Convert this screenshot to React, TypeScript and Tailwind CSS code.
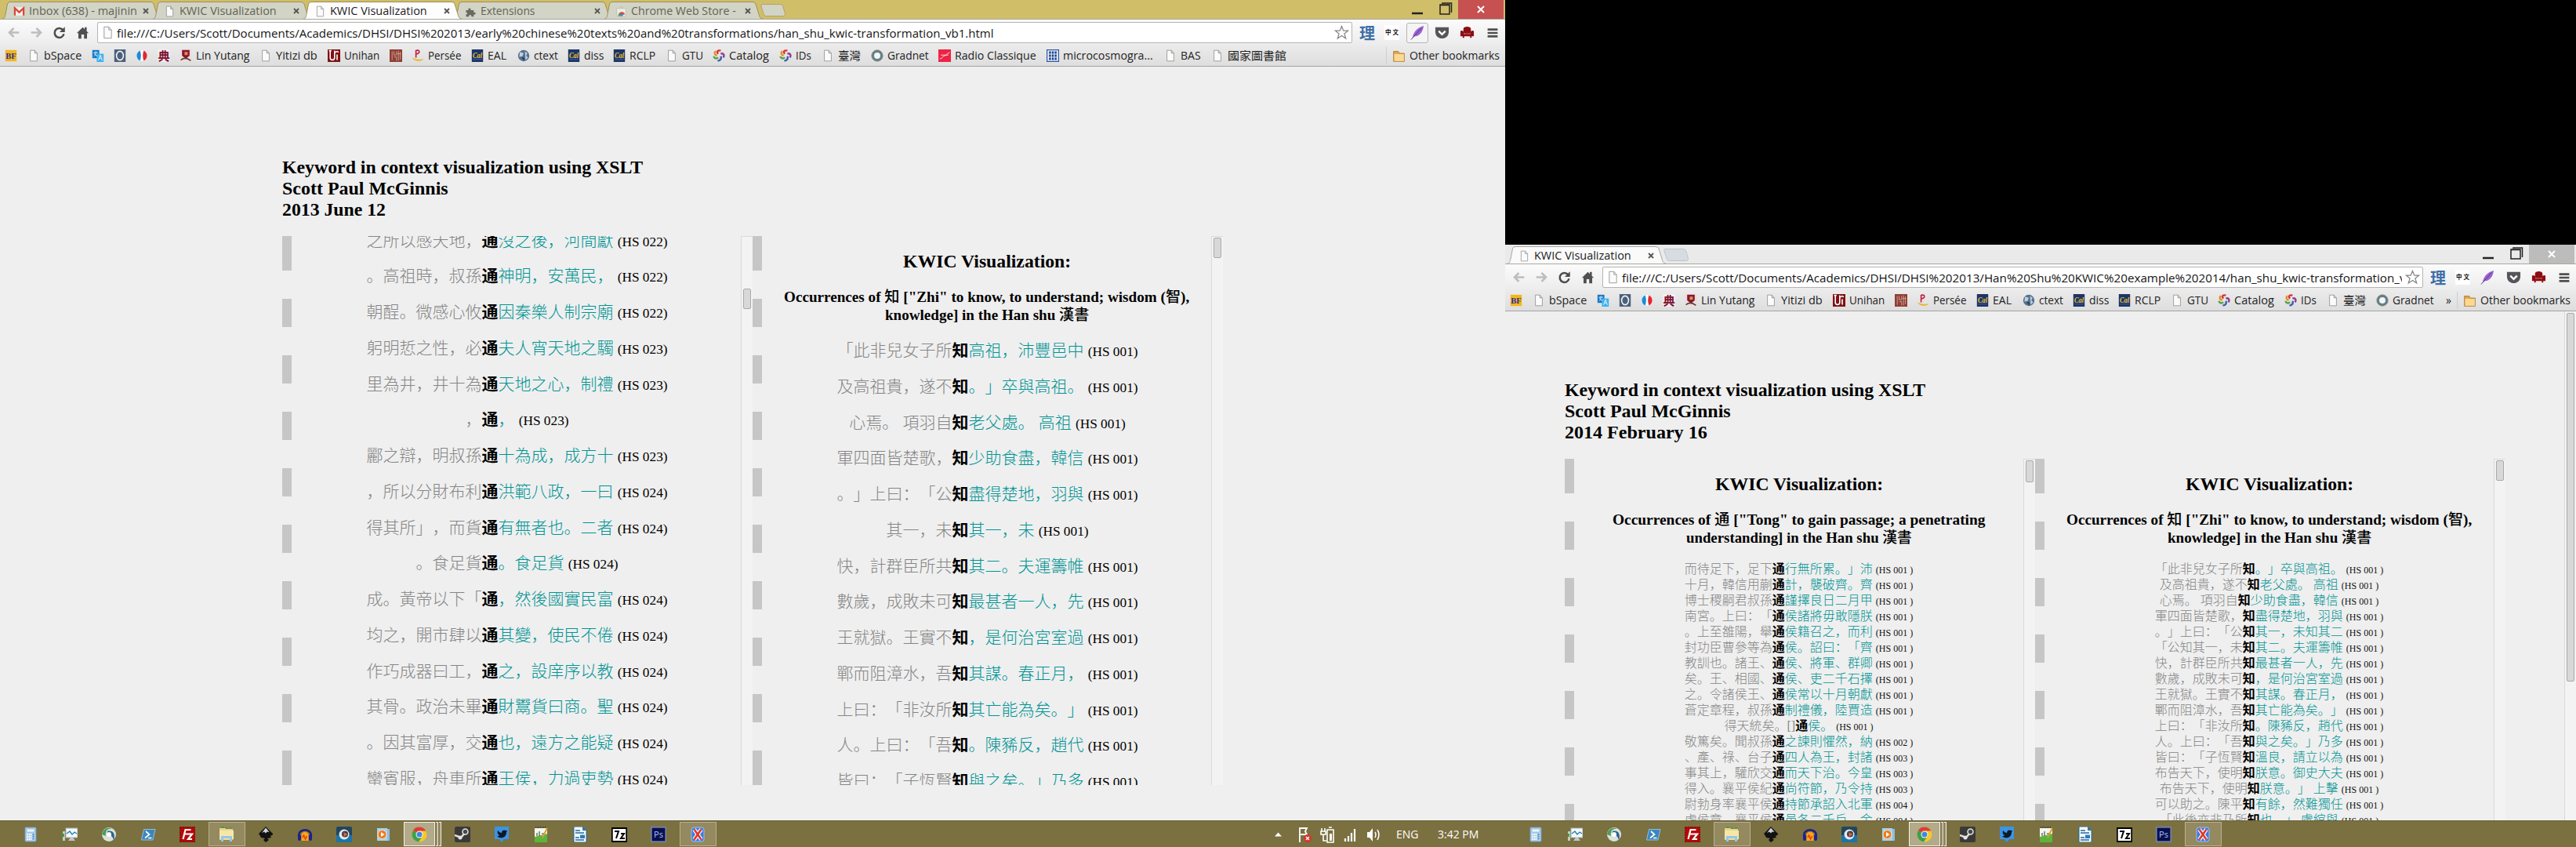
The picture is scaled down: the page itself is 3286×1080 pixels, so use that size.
import React, { useLayoutEffect, useRef, useState } from "react";

/* Text stretched or squeezed to a given width. */
function Fit({ w, className = "", children }: { w: number; className?: string; children: React.ReactNode }) {
  const ref = useRef<HTMLSpanElement>(null);
  const [scale, setScale] = useState(1);
  useLayoutEffect(() => {
    const el = ref.current;
    if (el && el.offsetWidth > 0) setScale(w / el.offsetWidth);
  }, [w]);
  return (
    <span className={"block shrink-0 whitespace-nowrap " + className} style={{ width: w }}>
      <span ref={ref} className="inline-block origin-left" style={{ transform: `scaleX(${scale})` }}>
        {children}
      </span>
    </span>
  );
}

const CAL = (
  <>
    <rect x="1" y="0" width="18" height="20" fill="#1d3466" />
    <path d="M3 16h14" stroke="#3d6fb5" strokeWidth="1" />
    <text x="10" y="14" fontSize="12" fontWeight="bold" fontStyle="italic" fill="#f1c433" textAnchor="middle" textLength="15" lengthAdjust="spacingAndGlyphs" fontFamily="Liberation Serif">Cal</text>
  </>
);
const SWIRL = (
  <g fill="none" strokeWidth="3">
    <path d="M9 7C5 3 9 1 13 2" stroke="#d8342c" />
    <path d="M13 7c5-2 6 3 4 6" stroke="#8b3d92" />
    <path d="M13 11c2 5-2 7-5 7" stroke="#3a62ad" />
    <path d="M9 13c-4 3-7 0-7-2" stroke="#53a345" />
    <path d="M7 10C2 8 3 4 5 3" stroke="#e8892c" />
  </g>
);

const ICONS: Record<string, React.ReactNode> = {
  page: <path d="M4.5 1.5h7l4 4.5v12.5h-11zM11.5 1.5v4.5h4" fill="#fbfbfb" stroke="#8d8d8d" />,
  gmail: (
    <>
      <rect x="1" y="3" width="18" height="14" fill="#f4efec" />
      <path d="M2.5 17V4.500l7.500 7 7.500-7V17" fill="none" stroke="#d9463a" strokeWidth="3" />
    </>
  ),
  puzzle: <path d="M2 8h4c-2-4 5-5 4 0h5v4c4-2 5 4 0 3.500V19h-4c1-4-5-4-4 0H2v-4c3 1 3-4 0-3z" fill="#6a6a62" />,
  store: (
    <>
      <path d="M2 5h16l-1 14H3z" fill="#ecebe4" stroke="#bbb9ab" />
      <path d="M7 5c0-4 6-4 6 0" fill="none" stroke="#bbb9ab" />
      <path d="M5 18c0-8 10-9 11-3l-5 1z" fill="#d8483a" />
      <path d="M5 18c0-3 1-5 3-5l3 5z" fill="#4a9e4c" />
      <circle cx="11" cy="16" r="2.300" fill="#4d84cf" />
    </>
  ),
  bf: (
    <>
      <rect x="1" y="1" width="18" height="18" fill="#f2b71c" />
      <text x="10" y="15.500" fontSize="13" fontWeight="bold" fill="#2a2b9c" textAnchor="middle" textLength="17" lengthAdjust="spacingAndGlyphs" fontFamily="Liberation Serif">BF</text>
    </>
  ),
  translate: (
    <>
      <rect x="1" y="1" width="11" height="13" fill="#1478c8" />
      <rect x="8" y="7" width="11" height="13" fill="#3cb2ee" />
      <path d="M3 5h7M6.500 3v2c0 4-2 5-3 6M4 6c1 2 3 4 5 4.500" stroke="#fff" fill="none" />
      <text x="13.500" y="17.500" fontSize="11" fill="#fff" textAnchor="middle" fontFamily="Open Sans">A</text>
    </>
  ),
  oval: (
    <>
      <rect x="1" y="0" width="18" height="20" fill="#4b617b" />
      <ellipse cx="10" cy="10" rx="5.500" ry="7" fill="none" stroke="#f5f5f5" strokeWidth="2" />
    </>
  ),
  french: (
    <>
      <circle cx="10" cy="10" r="8.500" fill="#fff" />
      <path d="M7 2c-7 3-7 13 0 16 2-5 2-11 0-16z" fill="#1d8bd8" />
      <path d="M13 2c7 3 7 13 0 16-2-5-2-11 0-16z" fill="#e3262f" />
    </>
  ),
  dian: (
    <>
      <rect width="20" height="20" fill="#f6eef0" />
      <text x="10" y="17.500" fontSize="19" fill="#7d1330" textAnchor="middle" fontWeight="bold" fontFamily="Noto Sans CJK TC">典</text>
    </>
  ),
  linyutang: (
    <>
      <rect width="20" height="20" fill="#ecdedd" />
      <path d="M4 1h12v9l-6 5-6-5z" fill="#8a1432" />
      <path d="M8 4h5v5H8z" fill="#d69445" />
      <path d="M2 17c5-4 11-3 16 1" stroke="#543" strokeWidth="2" fill="none" />
    </>
  ),
  unihan: (
    <>
      <rect width="20" height="20" fill="#7f1113" />
      <path d="M4 2v11c0 5 7 5 7 0V2M2 2h4M15 8v9M12 5c4-4 5 0 5 0" stroke="#fff" strokeWidth="2" fill="none" />
    </>
  ),
  seal: (
    <>
      <rect width="20" height="20" fill="#8e3f36" />
      <path d="M4 3v14M7 3v6h4V3M7 12h4v6M14 2v16M17 4v12M12 7h6" stroke="#dcb4a8" fill="none" />
    </>
  ),
  persee: (
    <>
      <path d="M7 13V2c7-3 7 6 0 5" stroke="#c11b3f" strokeWidth="2" fill="none" />
      <path d="M2 14c4 5 12 5 16 2-4 1-10 1-16-2z" fill="#e6b81f" stroke="#e6b81f" />
    </>
  ),
  cal: CAL,
  swirl: SWIRL,
  ctext: (
    <>
      <circle cx="10" cy="10" r="9" fill="#54718f" />
      <path d="M4 4l6 2-2 5-5 1zM12 3l4 3-2 4 3 3-4 4" fill="#bfd0de" />
      <path d="M7 13c2-2 5 1 4 5" fill="#27384c" />
    </>
  ),
  gradnet: (
    <>
      <circle cx="10" cy="10" r="7" fill="#f5f5f1" stroke="#5e7f92" strokeWidth="4" />
      <circle cx="10" cy="10" r="9" fill="none" stroke="#9a8a62" />
    </>
  ),
  radio: (
    <>
      <rect width="20" height="20" fill="#ee2344" />
      <path d="M2 15c5 0 5-5 8-5s3-4 8-5M4 9h12" stroke="#fff" fill="none" />
    </>
  ),
  micro: (
    <>
      <rect x=".5" y=".5" width="19" height="19" fill="#e8eef8" stroke="#2b57a5" strokeWidth="2" />
      <path d="M5.500 3v14M10 3v14M14.500 3v14" stroke="#163f8d" strokeWidth="3" strokeDasharray="4 1" />
    </>
  ),
  folder: (
    <>
      <path d="M2 3h7l2 3h7v12H2z" fill="#e0a84e" stroke="#a8742a" />
      <path d="M3 7h14.500v10.500H3z" fill="#fbd993" />
    </>
  ),
  li: <text x="10" y="17.500" fontSize="20" fill="#3f6fa8" textAnchor="middle" fontWeight="bold" fontFamily="Noto Sans CJK TC">理</text>,
  zhongwen: (
    <>
      <rect width="20" height="20" fill="#fff" />
      <text x="10" y="13" fontSize="8" fill="#111" textAnchor="middle" textLength="18" fontWeight="bold" fontFamily="Noto Sans CJK TC">中文</text>
    </>
  ),
  feather: (
    <>
      <path d="M3 17C4 10 9 3 18 1c-1 7-5 14-12 14z" fill="#9b63cf" />
      <path d="M1 19.500L15 4" stroke="#56308a" />
    </>
  ),
  pocket: (
    <>
      <path d="M1 3h18v6c0 12-18 12-18 0z" fill="#55555a" />
      <path d="M5.500 8l4.500 4.500L14.500 8" stroke="#fff" strokeWidth="2.500" fill="none" />
    </>
  ),
  sofa: (
    <>
      <path d="M5 9V5c0-4 10-4 10 0v4l-2 3H7zM1 8c3-2 5 1 5 4h8c0-3 2-6 5-4v7h-3v2h-2v-2H6v2H4v-2H1z" fill="#8c0d12" />
      <path d="M6 11.500h8" stroke="#c66" />
    </>
  ),
  menu: <path d="M2 4.500h16M2 10h16M2 15.500h16" stroke="#505050" strokeWidth="3.200" />,
  star: <path d="M10 1.500l2.400 6h6l-4.800 4 1.900 6.500L10 14.300 4.500 18l1.900-6.500-4.800-4h6z" fill="#fff" stroke="#868686" strokeWidth="1.300" />,
  back: <path d="M18 10H4M10 3.500L3.500 10l6.500 6.500" stroke="#bdbdbd" strokeWidth="3" fill="none" />,
  forward: <path d="M2 10h14M10 3.500L16.500 10 10 16.500" stroke="#bdbdbd" strokeWidth="3" fill="none" />,
  reload: (
    <>
      <path d="M15.500 6a7 7 0 1 0 1.500 6" stroke="#4d4d4d" strokeWidth="3" fill="none" />
      <path d="M18.500 1.500v8h-8z" fill="#4d4d4d" />
    </>
  ),
  home: <path d="M1 11l9-9 3 3V2h3v6l3 3h-2.500v8H12v-6H8v6H3.500v-8z" fill="#505050" />,
  calc: (
    <>
      <rect x="3" y="1" width="14" height="18" rx="1" fill="#b4d2ea" stroke="#6d99bf" />
      <rect x="5" y="3" width="10" height="4" fill="#eaf4fb" stroke="#7fa8ca" strokeWidth=".6" />
      <path d="M5.500 10h6M5.500 13h6M5.500 16h6" stroke="#fff" strokeWidth="2" strokeDasharray="1.500 1" />
      <path d="M13.500 9v8" stroke="#3f82bd" strokeWidth="2" strokeDasharray="1.500 1" />
    </>
  ),
  monitor: (
    <>
      <rect x="1" y="6" width="3" height="12" fill="#c7ccc7" />
      <rect x="1" y="9" width="2" height="4" fill="#28b12c" />
      <rect x="5" y="2" width="15" height="12" fill="#f4f8fa" stroke="#a9b0b4" />
      <path d="M6 9l4-3 3 4 3-3 3 2" stroke="#1d7fb4" fill="none" strokeWidth="1.300" />
      <path d="M11 14h3l3 4H8z" fill="#c3c6c8" />
    </>
  ),
  globe: (
    <>
      <circle cx="10" cy="10" r="9" fill="#d9e2dd" />
      <path d="M1 10C2 3 9 0 14 3c-6-1-9 3-8 9z" fill="#4f9c55" />
      <path d="M8 6c6-2 11 2 8 12-1-6-4-8-9-7z" fill="#2b648d" />
      <circle cx="10" cy="10" r="3" fill="#fff" />
    </>
  ),
  powershell: (
    <>
      <path d="M4.500 3.500H19l-3 13.500H1.500z" fill="#3c86bd" stroke="#8fc0e2" />
      <path d="M7 6l4.500 4-5.500 4.500M10 14.500h4.500" stroke="#fff" strokeWidth="1.700" fill="none" />
    </>
  ),
  filezilla: (
    <>
      <rect x=".7" y=".7" width="18.600" height="18.600" fill="#b70909" stroke="#8c0000" strokeWidth="1.400" strokeDasharray="2 1" />
      <path d="M4.500 16l3-12h7M6 9.500h5M10 9.500h6l-5 6.500h5" stroke="#fff" strokeWidth="2.200" fill="none" />
    </>
  ),
  explorer: (
    <>
      <path d="M1 2h7l1 1h9v14H1z" fill="#ecd58b" />
      <path d="M3 1h4M9 2h3M14 2h3" stroke="#4b9a4a" strokeWidth="2" />
      <path d="M1 5h18v11H1z" fill="#f7e6a7" />
      <path d="M3 19v-7h14v7h-3v-4H6v4z" fill="#8fc9ea" />
    </>
  ),
  inkscape: (
    <>
      <path d="M10 0l9 9c1 2-3 2-3 3l1 2-5 1 2 2-4 3-3-3 2-2-5-1-1-2-2-3z" fill="#121212" />
      <path d="M10 1.500L14.500 7l-3-.5-1.500 2-2-2L5 8z" fill="#cfd3da" />
    </>
  ),
  audacity: (
    <>
      <path d="M2.500 14C-1 1 21 1 17.500 14" stroke="#1c1d86" strokeWidth="2.500" fill="none" />
      <path d="M5.500 9q4.500-5 9 0v9h-9z" fill="#f9a61b" />
      <path d="M7 14l1.500-3 2 5 2-4" stroke="#e43b12" strokeWidth="1.500" fill="none" />
      <rect x="1" y="10" width="4" height="8" rx="2" fill="#20218f" />
      <rect x="15" y="10" width="4" height="8" rx="2" fill="#20218f" />
    </>
  ),
  camtasia: (
    <>
      <rect width="20" height="20" rx="2" fill="#22455f" />
      <path d="M0 11h20v9H0z" fill="#1d74a9" />
      <circle cx="10" cy="10" r="6.500" fill="#e6ebee" />
      <circle cx="11" cy="9.500" r="4" fill="#3a3f44" />
      <path d="M9.500 7l5 3-5 3z" fill="#e0653d" />
    </>
  ),
  wmp: (
    <>
      <rect x="9" y="3" width="9" height="15" fill="#8cbfe0" />
      <rect x="2" y="2" width="13" height="16" fill="#a9d2ec" />
      <circle cx="8.500" cy="10" r="5.500" fill="#f07a1b" stroke="#fbdcc0" />
      <path d="M7 7l4.500 3L7 13z" fill="#fff" />
    </>
  ),
  chrome: (
    <>
      <circle cx="10" cy="10" r="9.500" fill="#f4c928" />
      <path d="M10 10L1.800 5C5-1 15-1 18.300 5.500H10z" fill="#dc3d33" />
      <path d="M10 10L1.800 5C-1.500 11 2 18.800 9 19.500l5-7.500z" fill="#3da14a" />
      <circle cx="10" cy="10" r="4.500" fill="#fff" />
      <circle cx="10" cy="10" r="3.500" fill="#4586d8" />
    </>
  ),
  steam: (
    <>
      <rect width="20" height="20" rx="2" fill="#3b3937" />
      <path d="M0 11l8 3 5-6" stroke="#dedede" strokeWidth="2.500" fill="none" />
      <circle cx="13.500" cy="6.500" r="3.500" fill="#4b4948" stroke="#e4e4e4" strokeWidth="1.500" />
      <circle cx="7" cy="14" r="2.500" fill="#e4e4e4" />
    </>
  ),
  twitter: (
    <>
      <path d="M1 0h18v16h-6l-3 4-3-4H1z" fill="#3b94e4" />
      <path d="M4 12c3 0 3-1 3-1-2-1-3-3-2-6 2 2 3 3 5 3 0-4 4-4 5-3h2l-1 2c0 8-8 9-12 5z" fill="#0d1a26" />
    </>
  ),
  notepad: (
    <>
      <path d="M2 2h16v18H2z" fill="#f4f6ee" />
      <path d="M2 13l16-4v11H2z" fill="#5cb53a" />
      <path d="M3 1h14" stroke="#444" strokeWidth="2" strokeDasharray="1 1" />
      <path d="M5 12V8M8 12V6M11 9h4" stroke="#333" />
      <path d="M18 2l-6 12" stroke="#e09a2a" strokeWidth="2" />
    </>
  ),
  writer: (
    <>
      <path d="M2 0h11l5 5v15H2z" fill="#f7fafc" stroke="#1c6ba0" />
      <path d="M13 0v5h5z" fill="#2a7cb5" />
      <path d="M4 5h6M4 8h11M4 14h5M4 17h11" stroke="#1f6a9c" strokeWidth="1.500" />
      <rect x="10" y="10.500" width="6" height="4.500" fill="#2a7cb5" />
    </>
  ),
  sevenzip: (
    <>
      <rect x=".7" y="2" width="18.600" height="17" fill="#fff" stroke="#000" strokeWidth="2" />
      <path d="M4 6h5l-3 9M12 9h4l-4 6h5" stroke="#000" strokeWidth="2" fill="none" />
    </>
  ),
  photoshop: (
    <>
      <rect x="1" y="1" width="18" height="18" fill="#0b0f4e" stroke="#7f9fe6" />
      <text x="10" y="14" fontSize="11" fill="#a9c4ff" textAnchor="middle" fontFamily="Open Sans">Ps</text>
    </>
  ),
  oxygen: (
    <>
      <rect x="2" y="1" width="16" height="18" rx="3" fill="#3b7bdc" stroke="#9dc0f2" />
      <path d="M5.500 3.500l9 13M14.500 3.500l-9 13" stroke="#f3f5fa" strokeWidth="5" />
      <path d="M14.500 3.500l-9 13M5.500 3.500l9 13" stroke="#e0352a" strokeWidth="2.500" />
    </>
  ),
};

function Icon({ name, size = 18 }: { name: string; size?: number }) {
  return (
    <svg width={size} height={size} viewBox="0 0 20 20" className="block shrink-0">
      {ICONS[name]}
    </svg>
  );
}

/* Icon centred in a slot of a given width. */
function Slot({ name, w, size = 17 }: { name: string; w: number; size?: number }) {
  return (
    <span className="flex shrink-0 items-center justify-center" style={{ width: w }}>
      <Icon name={name} size={size} />
    </span>
  );
}

type TabData = { icon: string; title: string; w: number; active?: boolean };

function Tab({ tab, light }: { tab: TabData; light?: boolean }) {
  const fill = tab.active ? (light ? "#fafafa" : "#fdfdfd") : "#d2d4c5";
  const stroke = light ? "#a5a5a5" : "#9d905b";
  return (
    <div className={"relative h-[24px] w-[192px] shrink-0 " + (tab.active ? "z-10" : "")}>
      <svg width="202" height="24" viewBox="0 0 202 24" className="absolute top-0 left-0">
        <path d="M0 24C3 24 3 22 4 18L6.500 5Q7.500 2.500 10 2.500H189Q192 2.500 193 5L197 18C198 22 199 24 202 24" fill={fill} stroke={stroke} />
      </svg>
      <div className="relative flex h-full items-center pt-[4px] pl-[12px]">
        <Slot name={tab.icon} w={18} size={15} />
        <div className="flex w-[149px] shrink-0 pl-[4px]">
          <Fit w={tab.w} className={"text-[14px] leading-[20px] " + (tab.active ? "text-[#1c1c1c]" : "text-[#62625a]")}>{tab.title}</Fit>
        </div>
        <svg width="8" height="8" viewBox="0 0 8 8" className="shrink-0">
          <path d="M1 1l6 6M7 1L1 7" stroke="#555" strokeWidth="1.800" />
        </svg>
      </div>
    </div>
  );
}

type Bookmark = { icon: string; w: number; label?: string; lw?: number };

const BOOKMARKS: Bookmark[] = [
  { icon: "bf", w: 29 },
  { icon: "page", w: 82, label: "bSpace", lw: 48 },
  { icon: "translate", w: 28 },
  { icon: "oval", w: 28 },
  { icon: "french", w: 28 },
  { icon: "dian", w: 28 },
  { icon: "linyutang", w: 102, label: "Lin Yutang", lw: 68 },
  { icon: "page", w: 87, label: "Yitizi db", lw: 53 },
  { icon: "unihan", w: 79, label: "Unihan", lw: 45 },
  { icon: "seal", w: 28 },
  { icon: "persee", w: 76, label: "Persée", lw: 42 },
  { icon: "cal", w: 59, label: "EAL", lw: 24 },
  { icon: "ctext", w: 64, label: "ctext", lw: 31 },
  { icon: "cal", w: 58, label: "diss", lw: 25 },
  { icon: "cal", w: 67, label: "RCLP", lw: 33 },
  { icon: "page", w: 60, label: "GTU", lw: 27 },
  { icon: "swirl", w: 85, label: "Catalog", lw: 51 },
  { icon: "swirl", w: 54, label: "IDs", lw: 20 },
  { icon: "page", w: 63, label: "臺灣", lw: 29 },
  { icon: "gradnet", w: 86, label: "Gradnet", lw: 53 },
  { icon: "radio", w: 138, label: "Radio Classique", lw: 104 },
  { icon: "micro", w: 150, label: "microcosmogra...", lw: 115 },
  { icon: "page", w: 60, label: "BAS", lw: 26 },
  { icon: "page", w: 110, label: "國家圖書館", lw: 75 },
];

function BrowserChrome({ tabs, url, urlWidth, marks, overflow, light }: { tabs: TabData[]; url: string; urlWidth: number; marks: Bookmark[]; overflow?: boolean; light?: boolean }) {
  return (
    <header className="shrink-0 font-['Open_Sans','Noto_Sans_CJK_TC',sans-serif]">
      <div className={"flex h-[24px] justify-between pl-[3px] " + (light ? "bg-[#eaeaea]" : "bg-[#d0be69]")}>
        <div className="flex">
          {tabs.map((t, i) => (
            <Tab key={i} tab={t} light={light} />
          ))}
          <svg width="36" height="24" viewBox="0 0 36 24" className="ml-[6px]">
            <path d="M2.500 5.500h24q2 0 3 2l3 10q0 3-2 3H8q-2 0-3-3L2 8q-.5-2.500.5-2.500z" fill={light ? "#d7dce3" : "#d2d4c5"} stroke={light ? "#c2c2c2" : "#b1a468"} />
          </svg>
        </div>
        <div className="flex">
          <svg width="68" height="24" viewBox="0 0 68 24">
            <path d="M9 17h14" stroke="#222" strokeWidth="2.500" />
            <path d="M45 6h12v12H45zM45 6.500h12M48 5v-1h11.500v12" stroke="#222" strokeWidth="1.500" fill="none" />
          </svg>
          <div className={"mr-[2px] flex h-[24px] w-[58px] items-center justify-center " + (light ? "bg-[#bcbcbc]" : "bg-[#c75050]")}>
            <svg width="12" height="10" viewBox="0 0 12 10">
              <path d="M2 1l8 8M10 1L2 9" stroke="#fff" strokeWidth="2" />
            </svg>
          </div>
        </div>
      </div>
      <div className="flex h-[34px] items-center border-t border-[#a9a9a0] bg-linear-to-b from-[#fbfbfb] to-[#ececec] pl-[3px]">
        <Slot name="back" w={29} size={17} />
        <Slot name="forward" w={29} size={17} />
        <Slot name="reload" w={29} size={17} />
        <Slot name="home" w={31} size={17} />
        <div className="ml-[3px] flex h-[27px] grow items-center rounded-[2px] border border-[#b4b4b4] bg-white">
          <Slot name="page" w={24} size={17} />
          <div className="flex w-0 grow overflow-hidden">
            <Fit w={urlWidth} className="text-[15px] leading-[22px] text-[#151515]">{url}</Fit>
          </div>
          <Slot name="star" w={26} size={19} />
        </div>
        <div className="flex w-[195px] shrink-0 items-center pl-[3px]">
          <Slot name="li" w={32} size={20} />
          <Slot name="zhongwen" w={31} size={19} />
          <span className={light ? "flex py-px" : "ml-[3px] flex h-[26px] items-center rounded-[3px] border border-[#b5b5b5] bg-[#f4f4f4]"}>
            <Slot name="feather" w={light ? 32 : 26} size={19} />
          </span>
          <Slot name="pocket" w={34} size={19} />
          <Slot name="sofa" w={31} size={19} />
          <Slot name="menu" w={34} size={16} />
        </div>
      </div>
      <div className="flex h-[27px] items-center border-b border-[#a3a3a3] bg-linear-to-b from-[#ebebeb] to-[#dedede] pl-[5px] text-[14px] text-[#222]">
        {marks.map((m, i) => (
          <span key={i} className="flex shrink-0 items-center" style={{ width: m.w }}>
            <Slot name={m.icon} w={18} size={16} />
            {m.label && <Fit w={m.lw || 0} className="ml-[4px] leading-[20px]">{m.label}</Fit>}
          </span>
        ))}
        <span className="grow" />
        {overflow && <span className="mr-[7px] text-[14px] leading-[20px]">»</span>}
        <span className="mr-[6px] h-[22px] w-px bg-[#c9d0d8]" />
        <Slot name="folder" w={19} size={17} />
        <Fit w={115} className="mr-[7px] ml-[4px] leading-[20px]">Other bookmarks</Fit>
      </div>
    </header>
  );
}

/* before | after | source reference */
const TONG_A = `之所以感天地，|沒之後，河間獻|022
。高祖時，叔孫|神明，安萬民，|022
朝酲。微感心攸|因秦樂人制宗廟|022
躬明悊之性，必|夫人宵天地之䮷|023
里為井，井十為|天地之心，制禮|023
，|，|023
酈之辯，明叔孫|十為成，成方十|023
，所以分財布利|洪範八政，一曰|024
得其所」，而貨|有無者也。二者|024
。食足貨|。食足貨|024
成。黃帝以下「|，然後國實民富|024
均之，開市肆以|其變，使民不倦|024
作巧成器曰工，|之，設庠序以教|024
其骨。政治未畢|財鬻貨曰商。聖|024
。因其富厚，交|也，遠方之能疑|024
蠻賓服，舟車所|王侯，力過吏勢|024`.split("\n");

const ZHI_A = `「此非兒女子所|高祖，沛豐邑中|001
及高祖貴，遂不|。」卒與高祖。|001
心焉。 項羽自|老父處。 高祖|001
軍四面皆楚歌，|少助食盡，韓信|001
。」上曰：「公|盡得楚地，羽與|001
其一，未|其一，未|001
快，計群臣所共|其二。夫運籌帷|001
數歲，成敗未可|最甚者一人，先|001
王就獄。王實不|，是何治宮室過|001
鄲而阻漳水，吾|其謀。春正月，|001
上曰：「非汝所|其亡能為矣。」|001
人。上曰：「吾|。陳豨反，趙代|001
皆曰：「子恆賢|與之矣。」乃多|001`.split("\n");

const TONG_B = `而待足下，足下|行無所累。」沛|001
十月，韓信用蒯|計，襲破齊。齊|001
博士稷嗣君叔孫|謹擇良日二月甲|001
南宮。上曰：「|侯諸將毋敢隱朕|001
。上至雒陽，舉|侯籍召之，而利|001
封功臣曹參等為|侯。詔曰：「齊|001
教訓也。諸王、|侯、將軍、群卿|001
矣。王、相國、|侯、吏二千石擇|001
之。令諸侯王、|侯常以十月朝獻|001
蒼定章程，叔孫|制禮儀，陸賈造|001
得天統矣。[]|侯。|001
敬篤矣。聞叔孫|之諫則懼然，納|002
、產、祿、台子|四人為王，封諸|003
事其上，驩欣交|而天下治。今皇|003
得入。襄平侯紀|尚符節，乃令持|003
尉勃身率襄平侯|持節承詔入北軍|004
虛侯章、襄平侯|邑各二千戶，金|004`.split("\n");

const ZHI_B = `「此非兒女子所|。」卒與高祖。|001
及高祖貴，遂不|老父處。 高祖|001
心焉。 項羽自|少助食盡，韓信|001
軍四面皆楚歌，|盡得楚地，羽與|001
。」上曰：「公|其一，未知其二|001
「公知其一，未|其二。夫運籌帷|001
快，計群臣所共|最甚者一人，先|001
數歲，成敗未可|，是何治宮室過|001
王就獄。王實不|其謀。春正月，|001
鄲而阻漳水，吾|其亡能為矣。」|001
上曰：「非汝所|。陳豨反，趙代|001
人。上曰：「吾|與之矣。」乃多|001
皆曰：「子恆賢|溫良，請立以為|001
布告天下，使明|朕意。御史大夫|001
布告天下，使明|朕意。」 上擊|001
可以助之。陳平|有餘，然難獨任|001
「此後亦非乃所|也。」 盧綰與|001`.split("\n");

function Rows({ rows, word, small, className }: { rows: string[]; word: string; small?: boolean; className: string }) {
  return (
    <div className={"text-center whitespace-nowrap [font-kerning:none] [text-spacing-trim:space-all] " + className}>
      {rows.map((r, i) => {
        const [a, b, n] = r.split("|");
        return (
          <p key={i} className={small ? "h-[20px] text-[16px] leading-[20px]" : "h-[45.77px] text-[21px] leading-[45.77px]"}>
            <span className="font-light text-[#858585]">{a}</span>
            <b className="text-black">{word}</b>
            <span className="font-light text-[#009494]">{b}</span>{" "}
            <span className={small ? "text-[12px] text-[#111]" : "text-[17.300px] text-black"}>{small ? `(HS ${n} )` : `(HS ${n})`}</span>
          </p>
        );
      })}
    </div>
  );
}

const OFFSETS = [80, 152, 224, 296, 368, 440, 512, 584];

/* Scrolling column with a dashed left edge and its own scrollbar. */
function Column({ width, thumbTop, thumbHeight, children }: { width: number; thumbTop: number; thumbHeight: number; children: React.ReactNode }) {
  return (
    <section className="flex h-[700px] shrink-0 overflow-hidden" style={{ width }}>
      <div className="flex h-full w-[12px] shrink-0 flex-col justify-between">
        <i className="block h-[44px] bg-[#c6c6c6]" />
        {OFFSETS.map((o) => (
          <i key={o} className="block h-[36px] bg-[#c6c6c6]" />
        ))}
        <i className="block h-[44px] bg-[#c6c6c6]" />
      </div>
      <div className="w-0 grow overflow-hidden">{children}</div>
      <div className="w-[15px] shrink-0 border-t border-l border-[#dadada] bg-[#f3f3f3] px-[2px]">
        <div className="rounded-[2px] border border-[#a9a9a9] bg-[#d8d8d8]" style={{ marginTop: thumbTop, height: thumbHeight }} />
      </div>
    </section>
  );
}

function Heading({ lines, widths }: { lines: string[]; widths: number[] }) {
  return (
    <h3 className="text-[23.400px] leading-[27px] font-bold">
      {lines.map((l, i) => (
        <Fit key={l} w={widths[i]} className="h-[27px]">{l}</Fit>
      ))}
    </h3>
  );
}

const HAN = /([\u4e00-\u9fff]+)/;

function ColumnTitle({ lines, widths }: { lines: string[]; widths: number[] }) {
  return (
    <>
      <h3 className="flex justify-center pt-[19px] text-[23.400px] leading-[27px] font-bold">
        <Fit w={214} className="h-[27px]">KWIC Visualization:</Fit>
      </h3>
      <h4 className="mt-[20px] flex flex-col items-center text-[19px] leading-[23px] font-bold">
        {lines.map((l, i) => (
          <Fit key={l} w={widths[i]} className="h-[23px]">
            {l.split(HAN).map((part, j) => (
              <span key={j} className={j % 2 ? "font-medium" : ""}>{part}</span>
            ))}
          </Fit>
        ))}
      </h4>
    </>
  );
}

const ZHI_TITLE = ['Occurrences of 知 ["Zhi" to know, to understand; wisdom (智),', "knowledge] in the Han shu 漢書"];
const ZHI_WIDTHS = [517, 260];

const SHORTCUTS = ["calc", "monitor", "globe", "powershell", "filezilla", "explorer", "inkscape", "audacity", "camtasia", "wmp", "chrome", "steam", "twitter", "notepad", "writer", "sevenzip", "photoshop", "oxygen"];

function Shortcuts() {
  return (
    <div className="flex h-full items-center pl-[14px]">
      {SHORTCUTS.map((s) => {
        if (s === "chrome")
          return (
            <span key={s} className="flex h-full w-[51px] justify-center py-px pr-px">
              <span className="flex w-[40px] items-center justify-center border border-[#f4f2ea] bg-[#b2aa88]">
                <Icon name={s} size={20} />
              </span>
              <i className="ml-px w-[3px] border-y border-r border-[#f4f2ea] bg-[#958c66]" />
              <i className="ml-px w-[3px] border-y border-r border-[#f4f2ea] bg-[#958c66]" />
            </span>
          );
        const open = s === "explorer" || s === "oxygen";
        return (
          <span key={s} className="flex h-full w-[50px] items-center justify-center py-px">
            <span className={open ? "flex h-full w-[47px] items-center justify-center border border-[#b8b08f] bg-[#94895f]" : "flex"}>
              <Icon name={s} size={20} />
            </span>
          </span>
        );
      })}
    </div>
  );
}

function Tray() {
  return (
    <div className="flex h-full items-center font-['Open_Sans',sans-serif] text-[14px] text-white">
      <svg width="150" height="24" viewBox="0 0 150 24">
        <path d="M5 14.500l4.500-5 4.500 5z" fill="#fff" />
        <path d="M37 3v19M38 4h8l-2 4 2 4h-8" stroke="#fff" strokeWidth="1.800" fill="none" />
        <circle cx="47" cy="17" r="5" fill="#d8322e" />
        <path d="M45 15l4 4M49 15l-4 4" stroke="#fff" strokeWidth="1.400" />
        <path d="M72 6h8v16h-8zM74 3h4M65 4v4M69 4v4M64 8h6v4h-6zM67 12v8h4" stroke="#fff" strokeWidth="1.600" fill="none" />
        <path d="M75 11h3v9h-3z" fill="#fff" />
        <path d="M95 21v-4M99 21v-7M103 21V10M107 21V5" stroke="#fff" strokeWidth="2.200" />
        <path d="M123 9h3l4-5v17l-4-5h-3z" fill="#fff" />
        <path d="M133 9q2 3 0 7M136 6q4 6 0 13" stroke="#fff" strokeWidth="1.500" fill="none" />
      </svg>
      <Fit w={29} className="ml-[10px] leading-[20px]">ENG</Fit>
      <Fit w={52} className="ml-[24px] leading-[20px]">3:42 PM</Fit>
    </div>
  );
}

export default function App() {
  return (
    <div className="flex h-[1080px] w-[3286px] flex-col overflow-hidden bg-black font-['Liberation_Serif','Noto_Sans_CJK_SC',serif] text-black">
      <div className="flex h-[1046px] shrink-0">
        <div className="flex h-full w-[1920px] shrink-0 flex-col overflow-hidden bg-[#efefef]">
          <BrowserChrome
            tabs={[
              { icon: "gmail", title: "Inbox (638) - majinin", w: 138 },
              { icon: "page", title: "KWIC Visualization", w: 124 },
              { icon: "page", title: "KWIC Visualization", w: 124, active: true },
              { icon: "puzzle", title: "Extensions", w: 69 },
              { icon: "store", title: "Chrome Web Store -", w: 134 },
            ]}
            url="file:///C:/Users/Scott/Documents/Academics/DHSI/DHSI%202013/early%20chinese%20texts%20and%20transformations/han_shu_kwic-transformation_vb1.html"
            urlWidth={1119}
            marks={BOOKMARKS}
          />
          <main className="pt-[115px] pl-[360px]">
            <Heading lines={["Keyword in context visualization using XSLT", "Scott Paul McGinnis", "2013 June 12"]} widths={[460, 212, 132]} />
            <div className="mt-[20px] flex">
              <Column width={600} thumbTop={66} thumbHeight={26}>
                <Rows rows={TONG_A} word="通" className="-mt-[16.500px] pl-[2px]" />
              </Column>
              <Column width={600} thumbTop={1} thumbHeight={26}>
                <ColumnTitle lines={ZHI_TITLE} widths={ZHI_WIDTHS} />
                <Rows rows={ZHI_A} word="知" className="mt-[12px] pl-[2px]" />
              </Column>
            </div>
          </main>
        </div>
        <div className="flex h-full w-[1366px] shrink-0 flex-col pt-[312px]">
          <div className="flex h-[734px] flex-col overflow-hidden bg-[#efefef]">
            <BrowserChrome
              light
              overflow
              tabs={[{ icon: "page", title: "KWIC Visualization", w: 124, active: true }]}
              url="file:///C:/Users/Scott/Documents/Academics/DHSI/DHSI%202013/Han%20Shu%20KWIC%20example%202014/han_shu_kwic-transformation_vb2.html"
              urlWidth={1054}
              marks={BOOKMARKS.slice(0, 20)}
            />
            <div className="flex justify-between">
              <main className="pt-[87px] pl-[76px]">
                <Heading lines={["Keyword in context visualization using XSLT", "Scott Paul McGinnis", "2014 February 16"]} widths={[460, 212, 182]} />
                <div className="mt-[20px] flex">
                  <Column width={600} thumbTop={1} thumbHeight={28}>
                    <ColumnTitle lines={['Occurrences of 通 ["Tong" to gain passage; a penetrating', "understanding] in the Han shu 漢書"]} widths={[475, 288]} />
                    <Rows small rows={TONG_B} word="通" className="mt-[19px]" />
                  </Column>
                  <Column width={600} thumbTop={1} thumbHeight={26}>
                    <ColumnTitle lines={ZHI_TITLE} widths={ZHI_WIDTHS} />
                    <Rows small rows={ZHI_B} word="知" className="mt-[19px]" />
                  </Column>
                </div>
              </main>
              <div className="h-[649px] w-[15px] shrink-0 border-l border-[#dadada] bg-[#f3f3f3] px-[2px]">
                <div className="mt-[2px] h-[470px] rounded-[2px] border border-[#a9a9a9] bg-[#d8d8d8]" />
              </div>
            </div>
          </div>
        </div>
      </div>
      <footer className="flex h-[34px] shrink-0 border-t border-[#6a6038] bg-[#7b7040]">
        <div className="flex w-[1920px] justify-between pr-[34px]">
          <Shortcuts />
          <Tray />
        </div>
        <Shortcuts />
      </footer>
    </div>
  );
}
